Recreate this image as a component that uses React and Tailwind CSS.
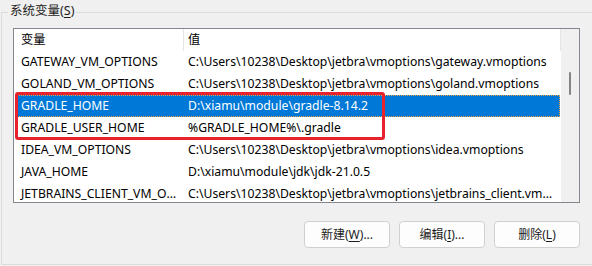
import React from "react";

const rows = [
  ["GATEWAY_VM_OPTIONS", "C:\\Users\\10238\\Desktop\\jetbra\\vmoptions\\gateway.vmoptions"],
  ["GOLAND_VM_OPTIONS", "C:\\Users\\10238\\Desktop\\jetbra\\vmoptions\\goland.vmoptions"],
  ["GRADLE_HOME", "D:\\xiamu\\module\\gradle-8.14.2"],
  ["GRADLE_USER_HOME", "%GRADLE_HOME%\\.gradle"],
  ["IDEA_VM_OPTIONS", "C:\\Users\\10238\\Desktop\\jetbra\\vmoptions\\idea.vmoptions"],
  ["JAVA_HOME", "D:\\xiamu\\module\\jdk\\jdk-21.0.5"],
  ["JETBRAINS_CLIENT_VM_OPTIONS", "C:\\Users\\10238\\Desktop\\jetbra\\vmoptions\\jetbrains_client.vmoptions"],
];

function Btn({ pre, k, post }) {
  return (
    <button className="w-[86px] h-[27px] rounded-[4px] border border-[#d0d0d0] bg-[#fdfdfd] text-[12px] text-[#1b1b1b] flex items-center justify-center">
      {pre}(<span className="underline underline-offset-2">{k}</span>){post}
    </button>
  );
}

export default function App() {
  return (
    <div
      className="relative w-[592px] h-[266px] bg-[#f0f0f0] overflow-hidden text-black"
      style={{ fontFamily: '"Noto Sans", "Noto Sans CJK SC", sans-serif' }}
    >
      <div className="relative ml-[1px] mt-[12px] w-[640px] h-[253px] border border-[#dcdcdc]">
        <div className="absolute left-[6px] top-[-11px] px-[2px] bg-[#f0f0f0] text-[12.5px] leading-[18px] text-[#1b1b1b]">
          系统变量(<span className="underline underline-offset-2">S</span>)
        </div>
        <div className="ml-[11px] mt-[15px] w-[567px] h-[175px] border border-[#828790] bg-white flex overflow-hidden">
          <div className="flex-1 min-w-0 flex flex-col text-[12.2px]">
            <div className="flex h-[22px] shrink-0">
              <div className="w-[170px] h-full pl-[7px] flex items-center border-r border-[#e5e5e5]">变量</div>
              <div className="flex-1 h-full pl-[4px] flex items-center border-r border-[#e5e5e5]">值</div>
            </div>
            <div className="flex flex-col pl-[3px] pr-[1px]">
              {rows.map(([a, b], i) => {
                const sel = i === 2;
                return (
                  <div
                    key={a}
                    className={
                      "flex h-[22px] shrink-0 items-center " +
                      (sel ? "bg-[#0078d7] text-white outline-1 outline-dotted outline-offset-[-1px] outline-[#f0a040]" : "")
                    }
                  >
                    <div className="w-[167px] shrink-0 pl-[4px] pr-[2px] truncate whitespace-nowrap">{a}</div>
                    <div className="flex-1 min-w-0 pl-[4px] pr-[2px] truncate whitespace-nowrap">{b}</div>
                  </div>
                );
              })}
            </div>
          </div>
          <div className="w-[18px] shrink-0 h-full bg-[#f0f0f0] flex justify-center">
            <div className="mt-[43px] w-[2px] h-[23px] bg-[#858585] rounded-full" />
          </div>
        </div>
        <div className="flex justify-start gap-[9px] ml-[302px] mt-[18px]">
          <Btn pre="新建" k="W" post="..." />
          <Btn pre="编辑" k="I" post="..." />
          <Btn pre="删除" k="L" post="" />
        </div>
      </div>
      <div className="absolute left-[15px] top-[92px] w-[370px] h-[48px] border-[3px] border-[#e8232d] rounded-[3px]" />
    </div>
  );
}
